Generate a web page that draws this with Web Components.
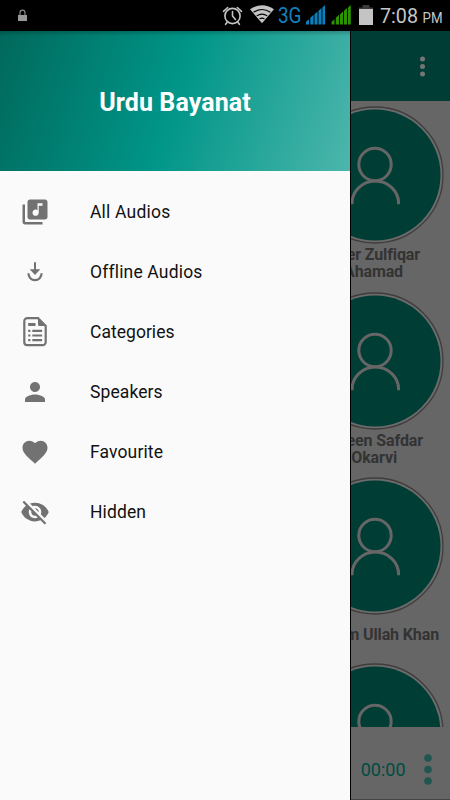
<!DOCTYPE html>
<html lang="en"><head><meta charset="utf-8"><title>Urdu Bayanat</title>
<style>html,body{margin:0;width:450px;height:800px;overflow:hidden;background:#000;font-family:Roboto,"Liberation Sans",sans-serif}</style></head>
<body><bayanat-app></bayanat-app>
<script>
function define(name, html){
  const t=document.createElement('template'); t.innerHTML=html;
  customElements.define(name, class extends HTMLElement{
    constructor(){super();this.attachShadow({mode:'open'}).append(t.content.cloneNode(true));}
  });
}
define('status-bar', `<style>
:host{display:block;height:31px;background:#000}svg{display:block}
text{font-family:Roboto,sans-serif}</style>
<svg width="450" height="31" viewBox="0 0 450 31">
<path d="M18 15h9v6h-9z" fill="#999"/><path d="M20 15v-2.3a2.5 2.5 0 0 1 5 0V15" fill="none" stroke="#888" stroke-width="1.2"/>
<g fill="none" stroke="#c4c4c4" stroke-width="1.6" stroke-linecap="round"><circle cx="232.5" cy="16" r="7.6"/><path d="M232.5 11.5V16l3 3.5M223.5 11.3l4.2-3.8M241.5 11.3l-4.2-3.8M227 22.5l-1.4 1.8M238 22.5l1.4 1.8"/></g>
<path d="M250 9.3Q262 1.3 274 9.3L262 23.3Z" fill="#c4c4c4"/><path d="M253.5 12.3q8.500-5.600 17 0M256.700 15.900q5.300-3.600 10.600 0M259.500 18.900q2.500-1.600 5 0" fill="none" stroke="#000" stroke-width="1.1"/>
<text x="278" y="23" font-size="22" fill="#1280bd" textLength="23.5" lengthAdjust="spacingAndGlyphs">3G</text>
<g fill="#0b80bf"><path d="M306 24.5v-2.8l3-2.5v5.3zM310.3 24.5v-6.7l3.2-3v9.7zM314.5 24.5V14.2l3-2.6v12.9zM318.5 24.5V10.8l3-2.7v16.4zM322.4 24.5V7.4l2.7-2.4v19.5z"/></g>
<g fill="#2b9300"><path d="M331.5 24.5v-2.8l3-2.5v5.3zM335.8 24.5v-6.7l3.2-3v9.7zM340 24.5V14.2l3-2.6v12.9zM344 24.5V10.8l3-2.7v16.4zM348 24.5V7.4l2.8-2.4v19.5z"/></g>
<path d="M359 9h14v16h-14z" fill="#c4c4c4"/><path d="M362.5 5h7v2.5h3.5V9h-14V7.5h3.5z" fill="#3b3b3b"/>
<text x="380" y="23" font-size="21" fill="#c6c6c6" textLength="38" lengthAdjust="spacingAndGlyphs">7:08</text><text x="422.500" y="23" font-size="14" fill="#c6c6c6" textLength="20" lengthAdjust="spacingAndGlyphs">PM</text>
</svg>`);
define('app-toolbar', `<style>:host{display:flex;height:70px;flex:none;background:#003d35;justify-content:flex-end;align-items:center;padding-right:25px;box-sizing:border-box}</style>
<svg width="5" height="21" viewBox="0 0 5 21" fill="#757575"><circle cx="2.5" cy="3" r="2.5"/><circle cx="2.5" cy="10.5" r="2.5"/><circle cx="2.5" cy="18" r="2.5"/></svg>`);
define('speaker-card', `<style>:host{display:block;width:150px;height:185.5px;flex:none}svg{display:block}
.n{font-weight:700;font-size:16px;line-height:17.3px;color:#333;text-align:right;white-space:nowrap;letter-spacing:-.12px}</style>
<svg width="150" height="138" viewBox="0 0 150 138"><circle cx="75" cy="69" r="68" fill="#6b6b6b" stroke="#403c3c" stroke-width="1.3"/><circle cx="75" cy="69" r="65.500" fill="#003d35"/>
<g fill="none" stroke="#666" stroke-width="3"><circle cx="75" cy="58.5" r="16.2"/><path d="M52 98.3v-1a23.3 22.2 0 0 1 46.6 0v1"/></g></svg>
<div class="n"><slot></slot></div>`);
define('speaker-list', `<style>:host{display:flex;flex-direction:column;align-items:flex-end;flex:1;min-height:0;overflow:hidden;padding-top:5px}</style>
<speaker-card><div style="padding:2px 30px 0 0">er Zulfiqar</div><div style="padding-right:47px">Ahamad</div></speaker-card>
<speaker-card><div style="padding:2px 27px 0 0">een Safdar</div><div style="padding-right:53px">Okarvi</div></speaker-card>
<speaker-card><div style="padding:11px 11px 0 0">m Ullah Khan</div></speaker-card>
<speaker-card></speaker-card>`);
define('player-bar', `<style>:host{display:flex;flex:none;height:73px;box-sizing:border-box;justify-content:flex-end;align-items:center;gap:18.500px;padding:12px 18px 0 0;color:#004c42;font-size:18px;border-bottom:1px solid #444}
span{padding-top:1px}</style>
<span>00:00</span><svg width="8" height="31" viewBox="0 0 8 31" fill="#20564f"><circle cx="4" cy="4" r="3.8"/><circle cx="4" cy="15.5" r="3.8"/><circle cx="4" cy="27" r="3.8"/></svg>`);
define('drawer-header', `<style>:host{display:flex;flex:none;height:140px;align-items:center;justify-content:center;padding-top:3px;box-sizing:border-box;color:#fff;font-weight:700;font-size:25px;background:linear-gradient(180deg,#0003,#0000 5px),linear-gradient(108deg,#00695c,#009688 50%,#4db6ac)}
span{letter-spacing:.1px}</style><span><slot></slot></span>`);
define('drawer-item', `<style>:host{display:flex;height:60px;align-items:center;font-size:17.5px;color:#111}
.i{width:70px;display:flex;justify-content:center;margin-right:20px}</style><div class="i"><slot name="icon"></slot></div><span><slot></slot></span>`);
define('nav-drawer', `<style>:host{display:flex;flex-direction:column;background:#fafafa}
nav{padding-top:11px}svg{display:block;fill:#727272}drawer-item{letter-spacing:var(--ls,0)}</style>
<drawer-header>Urdu Bayanat</drawer-header><nav>
<drawer-item style="--ls:.2px"><svg slot="icon" width="30" height="30" viewBox="0 0 24 24"><path d="M20 2H8c-1.1 0-2 .9-2 2v12c0 1.1.9 2 2 2h12c1.1 0 2-.9 2-2V4c0-1.1-.9-2-2-2zm-2 5h-3v5.500c0 1.380-1.120 2.500-2.500 2.500S10 13.880 10 12.500s1.120-2.500 2.500-2.500c.570 0 1.080.190 1.500.510V5h4v2zM4 6H2v14c0 1.100.9 2 2 2h14v-2H4V6z"/></svg>All Audios</drawer-item>
<drawer-item style="--ls:.17px"><svg slot="icon" width="30" height="30" viewBox="0 0 30 30"><path d="M14 5.300h2v7h4.300L15 18l-5.300-5.700H14z"/><path d="M8.400 16.300a6.600 6.900 0 0 0 13.200 0" fill="none" stroke="#727272" stroke-width="2.200"/></svg>Offline Audios</drawer-item>
<drawer-item style="--ls:.03px"><svg slot="icon" width="30" height="32" viewBox="0 0 30 32"><path d="M7.300 2.200H18L25.700 10v16.200a3 3 0 0 1-3 3H7.300a3 3 0 0 1-3-3V5.200a3 3 0 0 1 3-3z" fill="none" stroke="#727272" stroke-width="2.200"/><path d="M18 2l8 8h-6.500Q18 10 18 8.500zM8.200 7h7.300v3H8.200zM8.200 13.700h2.200v2.200H8.200zM8.200 18.400h2.200v2.200H8.200zM8.200 23.100h2.200v2.200H8.200zM12.300 13.700h9.800v2.200h-9.800zM12.300 18.400h9.800v2.200h-9.800zM12.300 23.100h9.800v2.200h-9.800z"/></svg>Categories</drawer-item>
<drawer-item style="--ls:.1px"><svg slot="icon" width="30" height="30" viewBox="0 0 24 24"><path d="M12 12c2.210 0 4-1.790 4-4s-1.790-4-4-4-4 1.790-4 4 1.790 4 4 4zm0 2c-2.670 0-8 1.340-8 4v2h16v-2c0-2.660-5.330-4-8-4z"/></svg>Speakers</drawer-item>
<drawer-item style="--ls:.13px"><svg slot="icon" width="30" height="30" viewBox="0 0 24 24"><path d="M12 21.350l-1.450-1.320C5.400 15.360 2 12.280 2 8.500 2 5.420 4.420 3 7.500 3c1.740 0 3.410.810 4.500 2.090C13.090 3.810 14.760 3 16.500 3 19.580 3 22 5.420 22 8.500c0 3.780-3.400 6.860-8.550 11.540L12 21.350z"/></svg>Favourite</drawer-item>
<drawer-item style="--ls:.12px"><svg slot="icon" width="30" height="30" viewBox="0 0 24 24"><path d="M12 7c2.760 0 5 2.240 5 5 0 .650-.130 1.260-.360 1.830l2.920 2.920c1.510-1.260 2.700-2.890 3.430-4.750-1.730-4.390-6-7.500-11-7.500-1.400 0-2.740.250-3.980.700l2.160 2.160C10.740 7.130 11.350 7 12 7zM2 4.270l2.280 2.280.460.460C3.080 8.300 1.780 10.020 1 12c1.730 4.390 6 7.500 11 7.500 1.550 0 3.030-.300 4.380-.840l.420.420L19.730 22 21 20.730 3.270 3 2 4.270zM7.530 9.800l1.550 1.550c-.050.210-.080.430-.080.650 0 1.660 1.340 3 3 3 .220 0 .440-.030.650-.080l1.550 1.550c-.670.330-1.410.530-2.200.530-2.760 0-5-2.240-5-5 0-.790.200-1.530.530-2.200zm4.310-.780l3.150 3.150.020-.160c0-1.660-1.340-3-3-3l-.170.010z"/></svg>Hidden</drawer-item>
</nav>`);
define('bayanat-app', `<style>:host{display:block;width:450px;height:800px;overflow:hidden;background:#666}
.b{display:grid;grid-template-columns:350px 100px;height:769px}
nav-drawer{grid-area:1/1;z-index:1;box-shadow:1px 0 #000}
main{grid-area:1/1/2/3;display:flex;flex-direction:column;min-height:0;overflow:hidden;background:#666}</style>
<status-bar></status-bar><div class="b"><main><app-toolbar></app-toolbar><speaker-list></speaker-list><player-bar></player-bar></main><nav-drawer></nav-drawer></div>`);
</script></body></html>
